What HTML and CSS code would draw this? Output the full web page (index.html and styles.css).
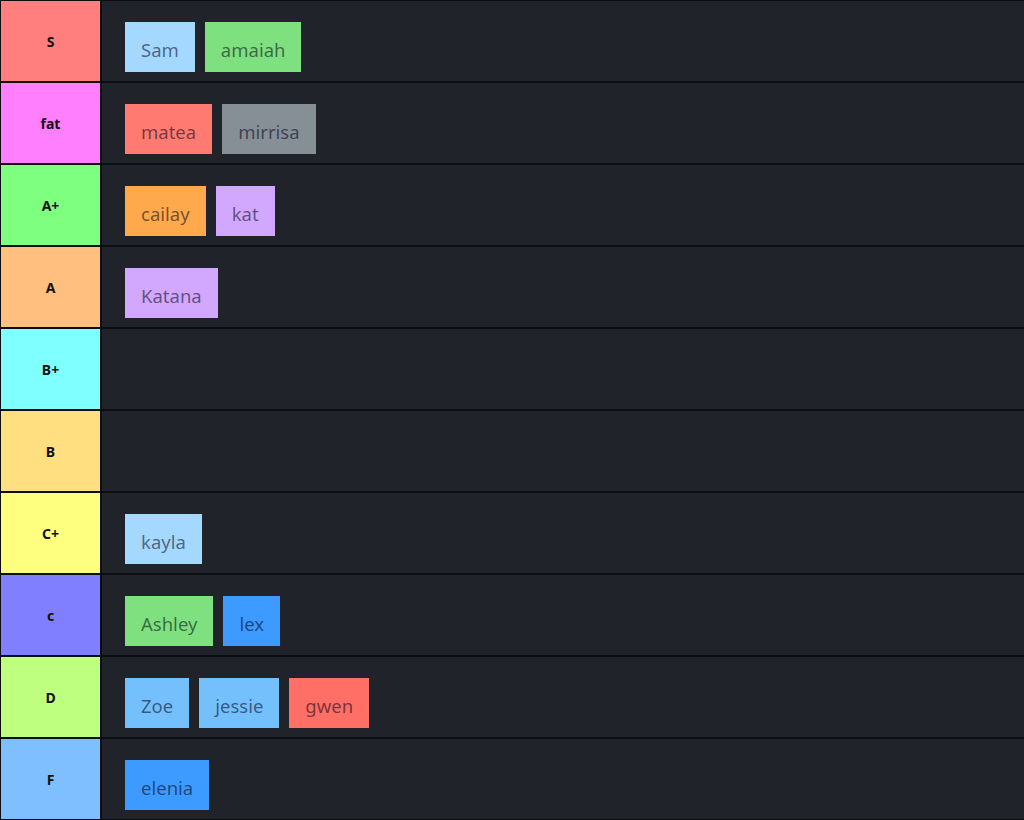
FILE: index.html
```html
<!DOCTYPE html>
<html lang="en">
<head>
<meta charset="utf-8">
<title>Tier list</title>
<link rel="stylesheet" href="styles.css">
</head>
<body>
<div class="tierlist">
  <div class="row">
    <div class="label t-s">S</div>
    <div class="items">
      <span class="item c-lightblue">Sam</span>
      <span class="item c-green">amaiah</span>
    </div>
  </div>
  <div class="row">
    <div class="label t-fat">fat</div>
    <div class="items">
      <span class="item c-red">matea</span>
      <span class="item c-gray">mirrisa</span>
    </div>
  </div>
  <div class="row">
    <div class="label t-aplus">A+</div>
    <div class="items">
      <span class="item c-orange">cailay</span>
      <span class="item c-violet">kat</span>
    </div>
  </div>
  <div class="row">
    <div class="label t-a">A</div>
    <div class="items">
      <span class="item c-violet">Katana</span>
    </div>
  </div>
  <div class="row">
    <div class="label t-bplus">B+</div>
    <div class="items"></div>
  </div>
  <div class="row">
    <div class="label t-b">B</div>
    <div class="items"></div>
  </div>
  <div class="row">
    <div class="label t-cplus">C+</div>
    <div class="items">
      <span class="item c-lightblue">kayla</span>
    </div>
  </div>
  <div class="row">
    <div class="label t-c">c</div>
    <div class="items">
      <span class="item c-green">Ashley</span>
      <span class="item c-blue">lex</span>
    </div>
  </div>
  <div class="row">
    <div class="label t-d">D</div>
    <div class="items">
      <span class="item c-sky">Zoe</span>
      <span class="item c-sky">jessie</span>
      <span class="item c-coral">gwen</span>
    </div>
  </div>
  <div class="row">
    <div class="label t-f">F</div>
    <div class="items">
      <span class="item c-blue">elenia</span>
    </div>
  </div>
</div>
</body>
</html>
```

FILE: styles.css
```css
html, body {
  margin: 0;
  padding: 0;
  background: #0d0e11;
}

body {
  width: 1024px;
  height: 820px;
  overflow: hidden;
  font-family: "Noto Sans", "Open Sans", sans-serif;
}

.tierlist {
  display: flex;
  flex-direction: column;
  gap: 2px;
  padding: 1px 0 1px 1px;
}

.row {
  display: flex;
  gap: 2px;
  height: 80px;
}

.label {
  width: 99px;
  flex: none;
  display: flex;
  align-items: center;
  justify-content: center;
  font-weight: 700;
  font-size: 14px;
  color: #111;
}

.items {
  flex: 1;
  background: #21232b;
  display: flex;
  align-items: flex-start;
  gap: 10px;
  padding: 21px 0 0 23px;
}

.item {
  height: 50px;
  box-sizing: border-box;
  padding: 15px 16px 0;
  font-size: 18.5px;
  line-height: 26px;
  color: rgba(0, 0, 20, 0.55);
  white-space: nowrap;
}

.t-s { background: #ff7f7f; }
.t-fat { background: #ff7fff; }
.t-aplus { background: #7fff7f; }
.t-a { background: #ffbf7f; }
.t-bplus { background: #7fffff; }
.t-b { background: #ffdf7f; }
.t-cplus { background: #ffff7f; }
.t-c { background: #7f7fff; }
.t-d { background: #bfff7f; }
.t-f { background: #7fbfff; }

.c-lightblue { background: #a5d8ff; }
.c-green { background: #7ee07f; }
.c-red { background: #ff7b72; }
.c-gray { background: #868e96; }
.c-orange { background: #ffa94d; }
.c-violet { background: #d2a8ff; }
.c-blue { background: #3d9bff; }
.c-sky { background: #74c0fc; }
.c-coral { background: #ff6f66; }
```
